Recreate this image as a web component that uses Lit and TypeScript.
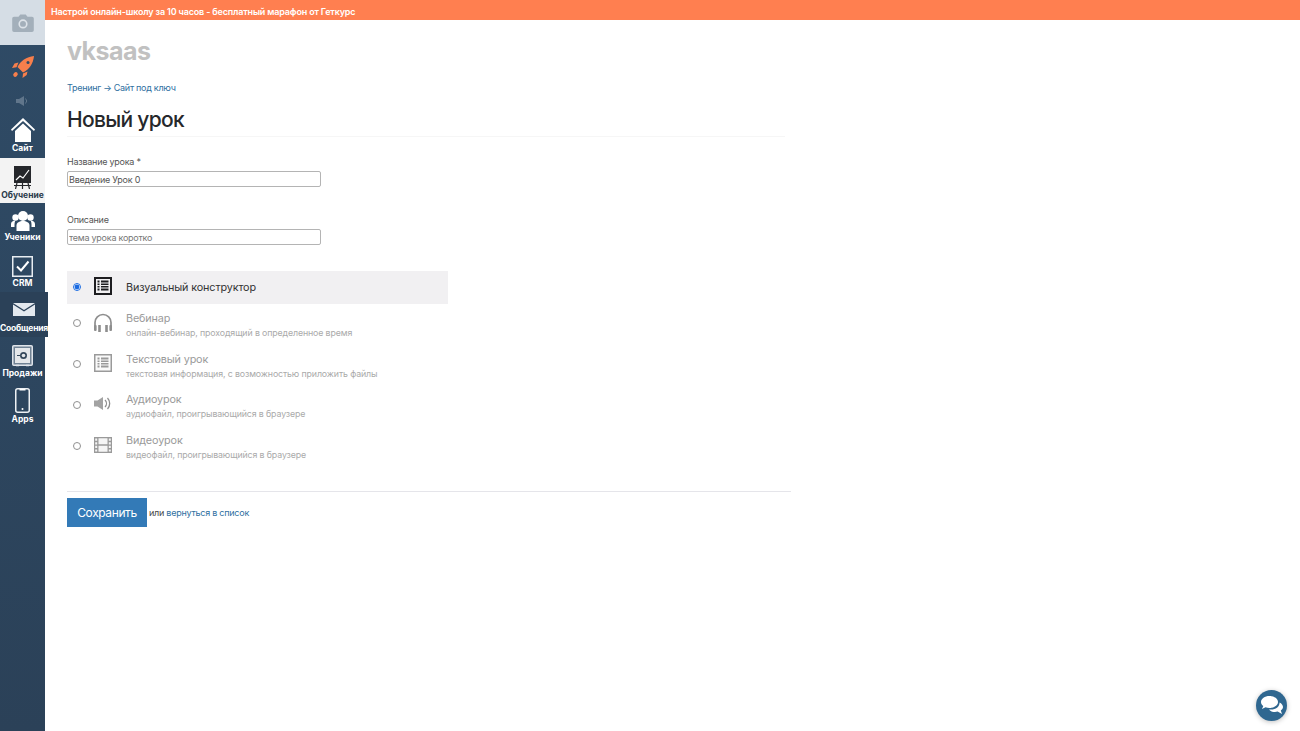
import { LitElement, html, css, svg } from "lit";
import { customElement } from "lit/decorators.js";

const listIcon = (bg: string, fg: string, w = 1.5) => svg`<svg width="18" height="18" viewBox="0 0 18 18"><rect x="${w / 2}" y="${w / 2}" width="${18 - w}" height="${18 - w}" fill="${bg}" stroke="${fg}" stroke-width="${w}"/><g fill="${fg}"><rect x="3.5" y="3.5" width="2" height="2"/><rect x="7" y="3.5" width="7.5" height="2"/><rect x="3.5" y="6.500" width="2" height="1.500"/><rect x="7" y="6.500" width="7.500" height="1.500"/><rect x="3.500" y="9" width="2" height="1.500"/><rect x="7" y="9" width="7.500" height="1.500"/><rect x="3.500" y="11.500" width="2" height="2"/><rect x="7" y="11.500" width="7.500" height="2"/></g></svg>`;

const lessonTypes = [
  { title: "Визуальный конструктор", sub: "", sel: true, icon: listIcon("#f1f0f2", "#1d1d20", 2) },
  { title: "Вебинар", sub: "онлайн-вебинар, проходящий в определенное время", sel: false,
    icon: svg`<svg width="20" height="19" viewBox="0 0 20 19"><path d="M2 13V9.500a8 8 0 0 1 16 0V13" fill="none" stroke="#8e8e8e" stroke-width="1.700"/><rect x="1" y="12" width="2.600" height="6" rx="1" fill="#8e8e8e"/><rect x="5.200" y="12" width="2.600" height="7" fill="#8e8e8e"/><rect x="12.200" y="12" width="2.600" height="7" fill="#8e8e8e"/><rect x="16.400" y="12" width="2.600" height="6" rx="1" fill="#8e8e8e"/></svg>` },
  { title: "Текстовый урок", sub: "текстовая информация, с возможностью приложить файлы", sel: false, icon: listIcon("#fafafa", "#9a9a9a") },
  { title: "Аудиоурок", sub: "аудиофайл, проигрывающийся в браузере", sel: false,
    icon: svg`<svg width="18" height="13" viewBox="0 0 18 13"><path d="M0 3.500h3.500L9 0v13L3.500 9.500H0z" fill="#a3a3a3"/><path d="M11 3a5 5 0 0 1 0 7M13.500 1a8 8 0 0 1 0 11" fill="none" stroke="#8e8e8e" stroke-width="1.300"/></svg>` },
  { title: "Видеоурок", sub: "видеофайл, проигрывающийся в браузере", sel: false,
    icon: svg`<svg width="18" height="16" viewBox="0 0 18 16"><path d="M0 0h18v16H0z" fill="#9a9a9a"/><path d="M4.500 1.200h9v6h-9zM4.500 8.800h9v6h-9zM1.200 1.500h2v2.200h-2zM1.200 5.200h2v2.200h-2zM1.200 8.800h2V11h-2zM1.200 12.400h2v2.200h-2zM14.800 1.500h2v2.200h-2zM14.800 5.200h2v2.200h-2zM14.800 8.800h2V11h-2zM14.800 12.400h2v2.200h-2z" fill="#f5f5f5"/></svg>` },
];

@customElement("app-root")
export class AppRoot extends LitElement {
  static styles = css`
    :host { display: flex; position: relative; width: 1300px; height: 731px; overflow: hidden; background: #fff; font-family: Inter, "Noto Sans", sans-serif; color: #333; }
    .side { width: 45px; flex: none; height: 731px; background: linear-gradient(#2f4b66, #2b4158); display: flex; flex-direction: column; align-items: stretch; }
    .logo { height: 45px; background: #d5dde5; display: flex; align-items: center; justify-content: center; }
    .rocket { height: 43px; display: flex; align-items: center; justify-content: center; }
    .spk { height: 25px; display: flex; align-items: center; justify-content: center; opacity: .55; }
    .item { height: 45px; width: 45px; flex: none; display: flex; flex-direction: column; align-items: center; justify-content: flex-end; padding-bottom: 5px; box-sizing: border-box; gap: 1px; color: #fff; font-size: 8.5px; font-weight: 700; white-space: nowrap; }
    .item.active { background: #f3f3f3; color: #2a3a4a; padding-bottom: 3px; }
    .item.students { height: 44px; }
    .item.crm, .item.sales { padding-bottom: 4px; }
    .item.apps { padding-bottom: 3px; }
    .item.msg { width: 48px; background: #2b4158; padding-bottom: 4px; }
    .item.msg svg { margin-bottom: 6px; }
    .item.msg span { letter-spacing: -.2px; }
    .main { flex: 1; min-width: 0; display: flex; flex-direction: column; }
    .banner { height: 20px; background: #ff7f50; color: #fff; font-size: 9px; letter-spacing: -.17px; font-weight: 600; line-height: 24px; padding-left: 6px; }
    .content { padding-left: 22px; width: 725px; }
    .brand { font-size: 25px; font-weight: 700; color: #c1c1c1; line-height: 30px; margin-top: 16px; letter-spacing: -.5px; }
    .crumbs { font-size: 9px; margin-top: 16px; line-height: 12px; color: #2f6f9f; letter-spacing: -.28px; }
    h1 { margin: 12px 0 0; font-size: 21px; font-weight: 550; line-height: 28px; color: #26282b; padding-bottom: 2px; border-bottom: 1px solid #f6f6f6; width: 718px; letter-spacing: -.7px; }
    label { display: block; font-size: 9px; letter-spacing: -.25px; color: #555; line-height: 12px; }
    .field { margin-top: 19px; }
    .field + .field { margin-top: 27px; }
    input[type="text"] { display: block; margin: 3px 0 0; width: 254px; height: 16px; box-sizing: border-box; border: 1px solid #b4b4b4; border-radius: 2px; font: 9px Inter, "Noto Sans", sans-serif; letter-spacing: -.25px; padding: 0 0 0 1px; color: #555; outline: none; }
    input[type="text"]::placeholder { color: #777; opacity: 1; }
    .types { margin-top: 26px; width: 381px; }
    .type { display: flex; align-items: center; height: 40.7px; color: #9a9a9a; }
    .type.sel { height: 33px; background: #f1f0f2; color: #333; margin-bottom: .6px; }
    input[type="radio"] { width: 8px; height: 8px; margin: 0 0 3px 6px; flex: none; accent-color: #1a6ae0; opacity: .8; }
    .type.sel input[type="radio"] { margin-bottom: 1px; opacity: 1; }
    .ico { width: 34px; margin: 0 6px 5px 5px; flex: none; display: flex; justify-content: center; align-items: center; }
    .type.sel .ico { margin-bottom: 3px; }
    .ico svg { display: block; }
    .txt.has-sub { padding-top: 1px; }
    .t { font-size: 10.8px; line-height: 14px; letter-spacing: -.13px; }
    .s { font-size: 8.8px; line-height: 12px; margin-top: 1px; color: #aaa; letter-spacing: -.12px; }
    .footer { margin-top: 24px; border-top: 1px solid #e5e5ea; width: 724px; padding-top: 6px; display: flex; align-items: center; gap: 2px; font-size: 9px; letter-spacing: -.25px; color: #444; }
    .btn { width: 80px; height: 29px; background: #337ab7; color: #fff; font-size: 12px; letter-spacing: -.4px; display: flex; align-items: center; justify-content: center; }
    .link { color: #2f6f9f; }
    .chat { position: absolute; left: 1256px; top: 690px; width: 31px; height: 31px; border-radius: 50%; background: #2f6790; box-shadow: 0 1px 5px rgba(0,0,0,.25); display: flex; align-items: center; justify-content: center; }
  `;

  render() {
    return html`
      <nav class="side">
        <div class="logo"><svg width="22" height="18" viewBox="0 0 24 20"><path d="M2 3h5l2-2.500h6L17 3h5a2 2 0 0 1 2 2v13a2 2 0 0 1-2 2H2a2 2 0 0 1-2-2V5a2 2 0 0 1 2-2z" fill="#a3afba"/><circle cx="12" cy="11" r="4.200" fill="none" stroke="#dde3e9" stroke-width="1.800"/></svg></div>
        <div class="rocket"><svg width="22" height="22" viewBox="0 0 22 22"><path d="M22 0C14.500.800 8.500 4.800 5.500 11l5.500 5.500C17.200 13.500 21.300 7.500 22 0z" fill="#f77f4c"/><path d="M6.500 6.500 2.500 7.500 0 12l4.500-.8zM15.500 15.500l-.8 3.500-4.200 3 .5-4.500z" fill="#f77f4c"/><ellipse cx="3.500" cy="18.500" rx="2.500" ry="2" transform="rotate(-45 3.500 18.500)" fill="#f77f4c"/><circle cx="16" cy="6.500" r="1.500" fill="#2f4b66"/></svg></div>
        <div class="spk"><svg width="13" height="10" viewBox="0 0 13 10"><path d="M0 3h3l5-3v10L3 7H0z" fill="#8a9aab"/><path d="M9.500 2.500a3.500 3.500 0 0 1 0 5" fill="none" stroke="#8a9aab"/></svg></div>
        <div class="item"><svg width="24" height="24" viewBox="0 0 24 24"><path d="M12 0 0 11.500l1 1.500L12 3l11 10 1-1.500z" fill="#fff"/><path d="M4 13 12 5.500 20 13v11H4z" fill="#fff"/></svg><span>Сайт</span></div>
        <div class="item active"><svg width="17" height="23" viewBox="0 0 17 23"><rect width="17" height="17" fill="#25272b"/><path d="M2 14 6 10 9 12 15 4" fill="none" stroke="#fff" stroke-width="1.200"/><path d="M3 17 1.500 23M8.500 17v6M14 17l1.500 6" stroke="#25272b" stroke-width="1.200"/><path d="M0 19.500h17" stroke="#25272b"/></svg><span>Обучение</span></div>
        <div class="item students"><svg width="24" height="20" viewBox="0 0 24 20"><circle cx="12" cy="5" r="5" fill="#fff"/><circle cx="4.500" cy="6.500" r="3.200" fill="#fff"/><circle cx="19.500" cy="6.500" r="3.200" fill="#fff"/><path d="M5.500 20v-5.500c0-3 3-4.500 6.500-4.500s6.500 1.500 6.500 4.500V20z" fill="#fff"/><path d="M0 16v-3c0-2 2-3.500 4.500-3.500 0 0-1 1.500-1 4V16zM24 16v-3c0-2-2-3.500-4.500-3.500 0 0 1 1.500 1 4V16z" fill="#fff"/></svg><span>Ученики</span></div>
        <div class="item crm"><svg width="21" height="21" viewBox="0 0 21 21"><rect x=".750" y=".750" width="19.500" height="19.500" fill="none" stroke="#e8edf2" stroke-width="1.500"/><path d="M5 10.500l4 4 7.500-9" fill="none" stroke="#fff" stroke-width="2"/></svg><span>CRM</span></div>
        <div class="item msg"><svg width="22" height="13" viewBox="0 0 22 13"><path d="M0 0h22L11 7z" fill="#e3e8ee"/><path d="M0 1.500l11 7 11-7V13H0z" fill="#e3e8ee"/></svg><span>Сообщения</span></div>
        <div class="item sales"><svg width="21" height="22" viewBox="0 0 21 22"><rect x=".750" y=".750" width="19.500" height="19.500" rx="1" fill="#6f8193" stroke="#dfe4ea" stroke-width="1.500"/><rect x="3" y="3" width="15" height="15" fill="#e4e7ea"/><circle cx="11.500" cy="10.500" r="3.500" fill="#35485b"/><circle cx="11.500" cy="10.500" r="1.800" fill="#e4e7ea"/><path d="M5 10.500h3" stroke="#35485b"/><path d="M4 20.500h3M14 20.500h3" stroke="#dfe4ea" stroke-width="1.500"/></svg><span>Продажи</span></div>
        <div class="item apps"><svg width="15" height="25" viewBox="0 0 15 25"><rect x=".750" y=".750" width="13.500" height="23.500" rx="2" fill="none" stroke="#eef1f4" stroke-width="1.500"/><rect x="4.500" y="1" width="6" height="1.500" fill="#fff"/><circle cx="7.500" cy="21" r="1" fill="#fff"/></svg><span>Apps</span></div>
      </nav>
      <div class="main">
        <div class="banner">Настрой онлайн-школу за 10 часов - бесплатный марафон от Геткурс</div>
        <div class="content">
          <div class="brand">vksaas</div>
          <div class="crumbs">Тренинг → Сайт под ключ</div>
          <h1>Новый урок</h1>
          <div class="field"><label>Название урока *</label><input type="text" value="Введение Урок 0"></div>
          <div class="field"><label>Описание</label><input type="text" placeholder="тема урока коротко"></div>
          <div class="types">
            ${lessonTypes.map((t) => html`
              <div class="type ${t.sel ? "sel" : ""}">
                <input type="radio" name="type" ?checked=${t.sel}>
                <div class="ico">${t.icon}</div>
                <div class="txt ${t.sub ? "has-sub" : ""}"><div class="t">${t.title}</div>${t.sub ? html`<div class="s">${t.sub}</div>` : ""}</div>
              </div>`)}
          </div>
          <div class="footer"><div class="btn">Сохранить</div><span>или <span class="link">вернуться в список</span></span></div>
        </div>
      </div>
      <div class="chat"><svg width="22" height="19" viewBox="0 0 22 19"><path d="M8.500 0C3.800 0 0 2.700 0 6c0 1.600.9 3 2.300 4.100L1 13l3.500-1.700c1.200.4 2.600.7 4 .7 4.700 0 8.500-2.700 8.500-6S13.200 0 8.500 0z" fill="#fff"/><path d="M18.500 6.500c.3 4-4 7.300-9 7-.6 0-1 0-1.500-.1C9.300 15 11.500 16 14 16c.9 0 1.800-.1 2.600-.4L21 18l-1.200-3.500C21 13.600 22 12.300 22 11c0-1.900-1.400-3.500-3.500-4.500z" fill="#fff"/></svg></div>
    `;
  }
}
